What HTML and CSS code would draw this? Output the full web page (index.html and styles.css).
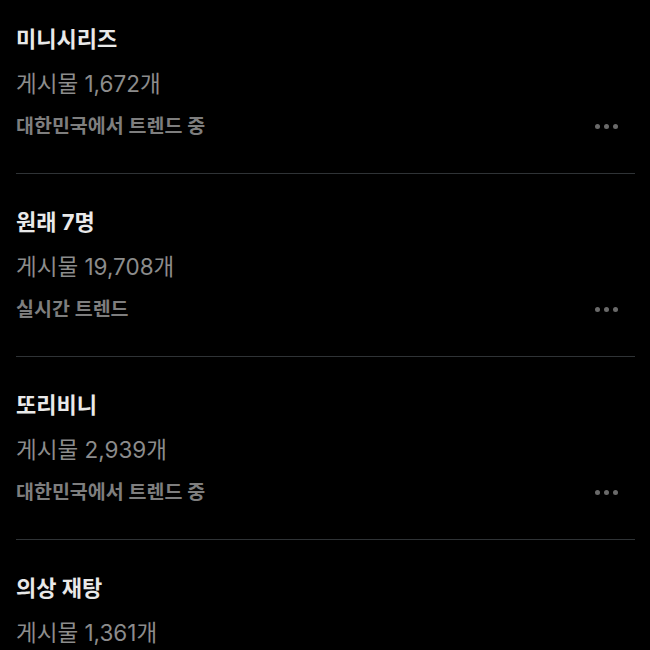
FILE: index.html
```html
<!DOCTYPE html>
<html lang="ko">
<head>
    <meta charset="UTF-8">
    <meta name="viewport" content="width=device-width, initial-scale=1.0">
    <title>트렌드</title>
    <link rel="stylesheet" href="styles.css">
</head>
<body>
<div class="trend-list">
    <div class="trend-item">
        <div class="trend-title">미니시리즈</div>
        <div class="trend-count">게시물 1,672개</div>
        <div class="trend-meta">
            <span class="trend-label">대한민국에서 트렌드 중</span>
            <span class="more-btn"><i></i><i></i><i></i></span>
        </div>
    </div>
    <div class="trend-item">
        <div class="trend-title">원래 7명</div>
        <div class="trend-count">게시물 19,708개</div>
        <div class="trend-meta">
            <span class="trend-label">실시간 트렌드</span>
            <span class="more-btn"><i></i><i></i><i></i></span>
        </div>
    </div>
    <div class="trend-item">
        <div class="trend-title">또리비니</div>
        <div class="trend-count">게시물 2,939개</div>
        <div class="trend-meta">
            <span class="trend-label">대한민국에서 트렌드 중</span>
            <span class="more-btn"><i></i><i></i><i></i></span>
        </div>
    </div>
    <div class="trend-item">
        <div class="trend-title">의상 재탕</div>
        <div class="trend-count">게시물 1,361개</div>
        <div class="trend-meta">
            <span class="trend-label">대한민국에서 트렌드 중</span>
            <span class="more-btn"><i></i><i></i><i></i></span>
        </div>
    </div>
</div>
</body>
</html>
```

FILE: styles.css
```css
html, body {
    height: 650px;
}

body {
    margin: 0;
    background: #000;
    font-family: Inter, "Noto Sans CJK KR", sans-serif;
    overflow: hidden;
}

.trend-list {
    margin-top: -9px; /* list is scrolled a little */
}

.trend-item {
    margin: 0 15px 0 16px;
    padding: 36px 0 35px;
    border-bottom: 1px solid #2f3336;
}

.trend-title {
    color: #e9e9e9;
    font-size: 22px;
    font-weight: bold;
    line-height: 24px;
}

.trend-count {
    color: #8c8c8c;
    font-size: 22.5px;
    line-height: 24px;
    margin-top: 21px;
}

.trend-meta {
    display: flex;
    align-items: center;
    justify-content: space-between;
    margin-top: 18px;
    line-height: 24px;
}

.trend-label {
    color: #7e7e7e;
    font-size: 19.5px;
    font-weight: 600;
}

.more-btn {
    display: flex;
    gap: 4px;
    padding-right: 17px;
}

.more-btn i {
    width: 5px;
    height: 5px;
    border-radius: 50%;
    background: #6a6a6a;
}
```
